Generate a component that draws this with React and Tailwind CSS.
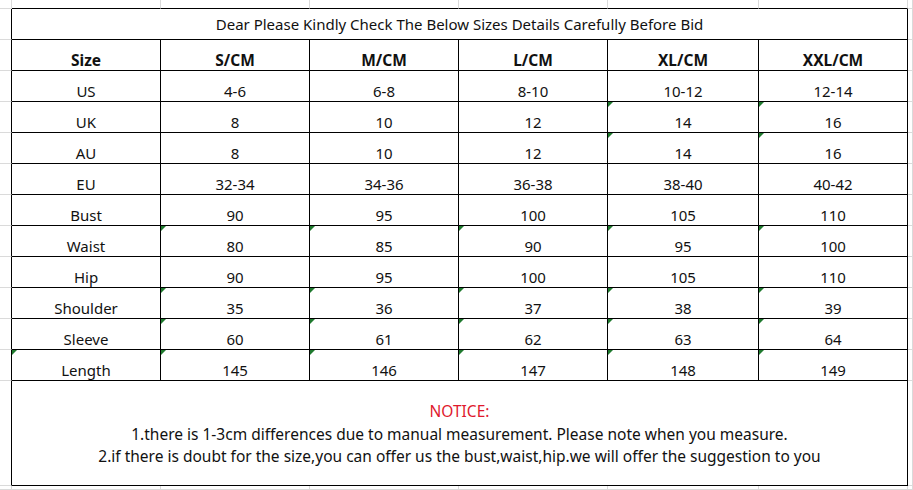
import React from "react";

const cols = ["S/CM", "M/CM", "L/CM", "XL/CM", "XXL/CM"];
const rows = [
  ["US", "4-6", "6-8", "8-10", "10-12", "12-14"],
  ["UK", "8", "10", "12", "14", "16"],
  ["AU", "8", "10", "12", "14", "16"],
  ["EU", "32-34", "34-36", "36-38", "38-40", "40-42"],
  ["Bust", "90", "95", "100", "105", "110"],
  ["Waist", "80", "85", "90", "95", "100"],
  ["Hip", "90", "95", "100", "105", "110"],
  ["Shoulder", "35", "36", "37", "38", "39"],
  ["Sleeve", "60", "61", "62", "63", "64"],
  ["Length", "145", "146", "147", "148", "149"],
];

// which cells show the green "number stored as text" marker
const marks = {
  UK: [4, 5],
  AU: [4, 5],
  Waist: [1, 2, 3, 4, 5],
  Shoulder: [1, 2, 3, 4, 5],
  Sleeve: [1, 2, 3, 4, 5],
  Length: [0, 1, 2, 3, 4, 5],
};

function Mark() {
  return (
    <span className="absolute left-0 top-0 h-0 w-0 border-t-[5px] border-r-[5px] border-t-[#1f7a2e] border-r-transparent" />
  );
}

function Gray({ className = "" }) {
  return <div className={"border-r border-b border-[#dadada] " + className} />;
}

export default function App() {
  return (
    <div
      className="grid h-[490px] w-[913px] overflow-hidden bg-white text-[15px] text-[#111]"
      style={{ fontFamily: '"Noto Sans", "Open Sans", sans-serif' }}
    >
      <div className="grid grid-cols-[12px_149px_149px_149px_149px_151px_149px_1fr] grid-rows-[9px_repeat(12,31px)_105px_1fr]">
        {/* top margin row */}
        <Gray />
        {[0, 1, 2, 3, 4, 5].map((i) => (
          <div key={i} className="border-r border-b border-r-[#dadada] border-b-black" />
        ))}
        <Gray />

        {/* title row */}
        <div className="border-r border-b border-r-black border-b-[#dadada]" />
        <div className="col-span-6 flex items-center justify-center border-r border-b border-black pt-[1px]">
          Dear Please Kindly Check The Below Sizes Details Carefully Before Bid
        </div>
        <Gray />

        {/* header row */}
        <div className="border-r border-b border-r-black border-b-[#dadada]" />
        <div className="flex items-end justify-center border-r border-b border-black text-[15.5px] font-bold leading-[20px]">
          Size
        </div>
        {cols.map((c) => (
          <div
            key={c}
            className="flex items-end justify-center border-r border-b border-black text-[15.5px] font-bold leading-[20px]"
          >
            {c}
          </div>
        ))}
        <Gray />

        {/* data rows */}
        {rows.map((r) => (
          <React.Fragment key={r[0]}>
            <div className="border-r border-b border-r-black border-b-[#dadada]" />
            {r.map((v, i) => (
              <div
                key={i}
                className="relative flex items-end justify-center border-r border-b border-black leading-[20px]"
              >
                {marks[r[0]] && marks[r[0]].includes(i) ? <Mark /> : null}
                {v}
              </div>
            ))}
            <Gray />
          </React.Fragment>
        ))}

        {/* notice row */}
        <div className="border-r border-b border-r-black border-b-[#dadada]" />
        <div className="col-span-6 flex flex-col items-center justify-center border-r border-b border-black pt-[2px] text-[15.5px] leading-[22.5px]">
          <div className="text-[#e0192d]">NOTICE:</div>
          <div>1.there is 1-3cm differences due to manual measurement. Please note when you measure.</div>
          <div>2.if there is doubt for the size,you can offer us the bust,waist,hip.we will offer the suggestion to you</div>
        </div>
        <Gray />

        {/* bottom margin row */}
        {[0, 1, 2, 3, 4, 5, 6, 7].map((i) => (
          <Gray key={i} />
        ))}
      </div>
    </div>
  );
}
